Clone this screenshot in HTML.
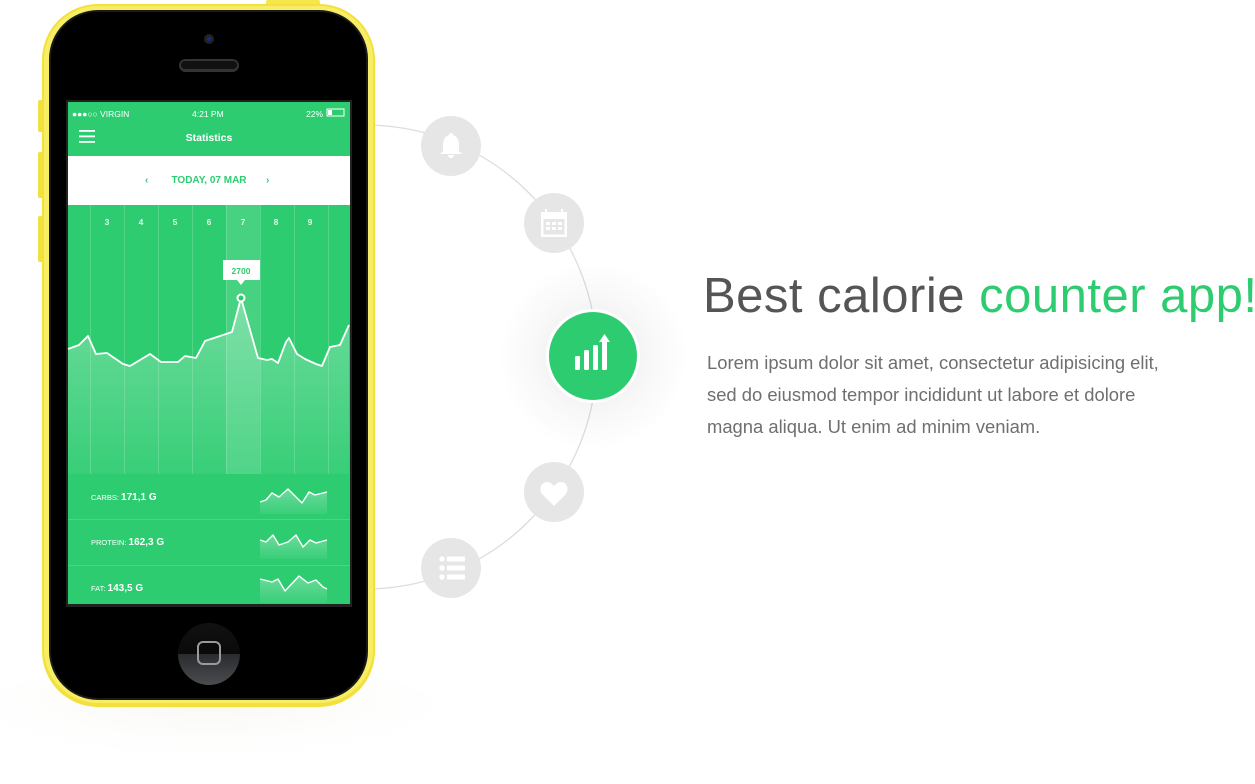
<!DOCTYPE html>
<html><head><meta charset="utf-8"><style>
html,body{margin:0;padding:0;background:#fff;width:1255px;height:784px;overflow:hidden;font-family:"Liberation Sans",sans-serif}
svg{position:absolute;left:0;top:0}
.h{position:absolute;left:703px;top:268px;font-size:49px;color:#555;white-space:nowrap;letter-spacing:0.5px;font-weight:300}
.h span{color:#2ecc71}
.p{position:absolute;left:707px;top:347px;font-size:18.4px;line-height:32px;color:#6f6f6f;white-space:nowrap}
</style></head><body>
<svg width="1255" height="784" viewBox="0 0 1255 784">
<defs>
<radialGradient id="sh" cx="0.5" cy="0.5" r="0.5"><stop offset="0" stop-color="#000" stop-opacity="0.10"/><stop offset="0.6" stop-color="#000" stop-opacity="0.03"/><stop offset="1" stop-color="#000" stop-opacity="0"/></radialGradient>
<radialGradient id="fl" cx="0.5" cy="0.3" r="0.6"><stop offset="0" stop-color="#e4e4d6" stop-opacity="0.35"/><stop offset="1" stop-color="#fff" stop-opacity="0"/></radialGradient>
<linearGradient id="ar" x1="0" y1="0" x2="0" y2="1"><stop offset="0" stop-color="#fff" stop-opacity="0.3"/><stop offset="1" stop-color="#fff" stop-opacity="0.05"/></linearGradient>
<linearGradient id="hb" x1="0" y1="0" x2="0" y2="1"><stop offset="0" stop-color="#111"/><stop offset="0.5" stop-color="#0a0a0a"/><stop offset="0.5" stop-color="#2a2b2e"/><stop offset="1" stop-color="#4a4c50"/></linearGradient>
</defs>
<ellipse cx="210" cy="720" rx="240" ry="60" fill="url(#fl)"/>
<path d="M365 125 A228 228 0 0 1 365 589" fill="none" stroke="#ddd" stroke-width="1.3"/>
<rect x="266" y="0" width="54" height="6" rx="2" fill="#f5e64a"/>
<rect x="38" y="100" width="6" height="32" rx="2" fill="#f0e040"/>
<rect x="38" y="152" width="6" height="46" rx="2" fill="#f0e040"/>
<rect x="38" y="216" width="6" height="46" rx="2" fill="#f0e040"/>
<rect x="42" y="4" width="333" height="703" rx="56" fill="#f2e13c"/>
<rect x="44" y="6" width="329" height="697" rx="54" fill="#f8ee66"/>
<rect x="49" y="10" width="319" height="690" rx="49" fill="#1a1a1a"/>
<rect x="51" y="12" width="315" height="686" rx="47" fill="#000"/>
<circle cx="209" cy="39" r="5" fill="#222"/><circle cx="209" cy="39" r="2" fill="#1a2a8a"/>
<rect x="179" y="59" width="60" height="13" rx="6.5" fill="#333"/>
<rect x="181" y="61" width="56" height="8" rx="4" fill="#111"/>
<circle cx="209" cy="654" r="31" fill="url(#hb)"/>
<rect x="198" y="642" width="22" height="22" rx="5" fill="none" stroke="#9a9a9a" stroke-width="2"/>
<rect x="66" y="100" width="286" height="507" fill="#222"/>
<rect x="68" y="102" width="282" height="502" fill="#2ecc71"/>
<g fill="#fff" font-family="Liberation Sans,sans-serif">
<text x="72" y="117" font-size="8.5">●●●○○ VIRGIN</text>
<text x="192" y="117" font-size="8.5">4:21 PM</text>
<text x="306" y="117" font-size="8.5">22%</text>
<rect x="327" y="109" width="17" height="7" fill="none" stroke="#fff" stroke-width="1"/><rect x="328" y="110" width="4" height="5"/>
<rect x="79" y="130" width="16" height="1.8"/><rect x="79" y="135.5" width="16" height="1.8"/><rect x="79" y="141" width="16" height="1.8"/>
<text x="209" y="141" font-size="10.5" font-weight="bold" text-anchor="middle">Statistics</text>
</g>
<rect x="68" y="156" width="282" height="49" fill="#fff"/>
<g fill="#2ecc71" font-family="Liberation Sans,sans-serif" font-weight="bold" font-size="10">
<text x="209" y="183" text-anchor="middle">TODAY, 07 MAR</text>
<text x="145" y="183">‹</text><text x="266" y="183">›</text>
</g>
<rect x="226" y="205" width="34" height="269" fill="#fff" fill-opacity="0.12"/>
<g stroke="#fff" stroke-opacity="0.18" stroke-width="1">
<line x1="90.5" y1="205" x2="90.5" y2="474"/><line x1="124.5" y1="205" x2="124.5" y2="474"/><line x1="158.5" y1="205" x2="158.5" y2="474"/><line x1="192.5" y1="205" x2="192.5" y2="474"/><line x1="226.5" y1="205" x2="226.5" y2="474"/><line x1="260.5" y1="205" x2="260.5" y2="474"/><line x1="294.5" y1="205" x2="294.5" y2="474"/><line x1="328.5" y1="205" x2="328.5" y2="474"/>
</g>
<g fill="#fff" fill-opacity="0.85" font-size="8.5" font-weight="bold" text-anchor="middle">
<text x="107" y="225">3</text><text x="141" y="225">4</text><text x="175" y="225">5</text><text x="209" y="225">6</text><text x="243" y="225">7</text><text x="276" y="225">8</text><text x="310" y="225">9</text>
</g>
<path d="M68 349 L79 345 L88 336 L96 354 L107 353 L123 364 L130 366 L150 354 L161 362 L178 362 L185 356 L196 358 L205 341 L232 332 L241 298 L258 358 L267 360 L272 359 L278 363 L286 342 L289 338 L297 354 L305 359 L316 364 L322 366 L330 347 L340 345 L349 325 L349 474 L68 474Z" fill="url(#ar)"/>
<path d="M68 349 L79 345 L88 336 L96 354 L107 353 L123 364 L130 366 L150 354 L161 362 L178 362 L185 356 L196 358 L205 341 L232 332 L241 298 L258 358 L267 360 L272 359 L278 363 L286 342 L289 338 L297 354 L305 359 L316 364 L322 366 L330 347 L340 345 L349 325" fill="none" stroke="#fff" stroke-width="1.8" stroke-linejoin="round"/>
<circle cx="241" cy="298" r="4.5" fill="#fff"/><circle cx="241" cy="298" r="2.5" fill="#2ecc71"/>
<rect x="223" y="260" width="37" height="20" fill="#fff"/><path d="M237 280 L241 285 L245 280Z" fill="#fff"/>
<text x="241" y="274" font-size="8.5" font-weight="bold" fill="#2ecc71" text-anchor="middle">2700</text>
<g stroke="#fff" stroke-opacity="0.15"><line x1="68" y1="519.5" x2="350" y2="519.5"/><line x1="68" y1="565.5" x2="350" y2="565.5"/></g>
<g fill="#fff" font-family="Liberation Sans,sans-serif">
<text x="91" y="500" font-size="7.5">CARBS: <tspan font-size="10" font-weight="bold">171,1 G</tspan></text>
<text x="91" y="545" font-size="7.5">PROTEIN: <tspan font-size="10" font-weight="bold">162,3 G</tspan></text>
<text x="91" y="591" font-size="7.5">FAT: <tspan font-size="10" font-weight="bold">143,5 G</tspan></text>
</g>
<g fill="url(#ar)" stroke="none">
<path d="M260 502 L266 500 L272 493 L279 497 L288 489 L302 503 L309 492 L315 495 L327 492 L327 514 L260 514Z"/>
<path d="M260 540 L266 542 L273 535 L279 545 L288 542 L296 535 L303 547 L310 540 L316 543 L327 540 L327 559 L260 559Z"/>
<path d="M260 579 L272 582 L278 579 L285 591 L299 576 L308 583 L316 580 L323 587 L327 589 L327 603 L260 603Z"/>
</g>
<g fill="none" stroke="#fff" stroke-width="1.4" stroke-linejoin="round">
<path d="M260 502 L266 500 L272 493 L279 497 L288 489 L302 503 L309 492 L315 495 L327 492"/>
<path d="M260 540 L266 542 L273 535 L279 545 L288 542 L296 535 L303 547 L310 540 L316 543 L327 540"/>
<path d="M260 579 L272 582 L278 579 L285 591 L299 576 L308 583 L316 580 L323 587 L327 589"/>
</g>
<g fill="#e6e6e6"><circle cx="451" cy="146" r="30"/><circle cx="554" cy="223" r="30"/><circle cx="554" cy="492" r="30"/><circle cx="451" cy="568" r="30"/></g>
<g fill="#fff">
<path d="M451 133 a2 2 0 0 1 2 2 c5 2 6 6 6 11 l0 5 l3 3 l-22 0 l3 -3 l0 -5 c0 -5 1 -9 6 -11 a2 2 0 0 1 2 -2z"/><path d="M448 155 a3 3 0 0 0 6 0z"/>
<path d="M541 212 h26 v25 h-26z M543.5 219 v15.5 h21 v-15.5z"/><rect x="545" y="209" width="2" height="5"/><rect x="561" y="209" width="2" height="5"/>
<rect x="546" y="222" width="4" height="3"/><rect x="552" y="222" width="4" height="3"/><rect x="558" y="222" width="4" height="3"/><rect x="546" y="227" width="4" height="3"/><rect x="552" y="227" width="4" height="3"/><rect x="558" y="227" width="4" height="3"/>
<path d="M554 506 L543 495 C538 490 541 482 547 482 C550 482 552 484 554 486 C556 484 558 482 561 482 C567 482 570 490 565 495Z"/>
<circle cx="442" cy="559" r="2.7"/><circle cx="442" cy="568" r="2.7"/><circle cx="442" cy="577" r="2.7"/>
<rect x="447" y="556.5" width="18" height="5"/><rect x="447" y="565.5" width="18" height="5"/><rect x="447" y="574.5" width="18" height="5"/>
</g>
<circle cx="593" cy="356" r="95" fill="url(#sh)"/>
<circle cx="593" cy="356" r="47" fill="#fff"/>
<circle cx="593" cy="356" r="44" fill="#2ecc71"/>
<g fill="#fff"><rect x="575" y="356" width="5" height="14" rx="1.5"/><rect x="584" y="350" width="5" height="20" rx="1.5"/><rect x="593" y="345" width="5" height="25" rx="1.5"/><rect x="602" y="340" width="5" height="30" rx="1.5"/><path d="M599 342 L604.5 334 L610 342Z"/></g>
</svg>
<div class="h">Best calorie <span>counter app!</span></div>
<div class="p">Lorem ipsum dolor sit amet, consectetur adipisicing elit,<br>sed do eiusmod tempor incididunt ut labore et dolore<br>magna aliqua. Ut enim ad minim veniam.</div>
</body></html>
